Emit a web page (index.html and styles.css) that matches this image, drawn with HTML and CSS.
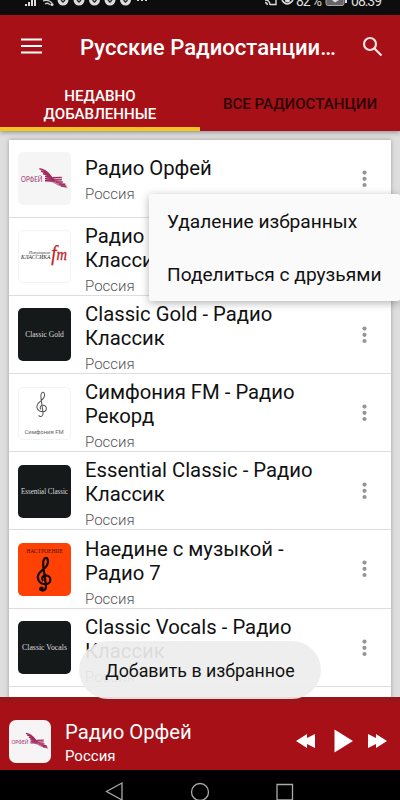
FILE: index.html
```html
<!DOCTYPE html>
<html lang="ru">
<head>
<meta charset="utf-8">
<title>Русские Радиостанции</title>
<link rel="stylesheet" href="styles.css">
</head>
<body>
<svg class="defs" width="0" height="0">
  <defs>
    <symbol id="orfey" viewBox="0 0 52 52">
      <text x="3" y="29.500" font-family="Lato" font-size="7" textLength="21" lengthAdjust="spacingAndGlyphs" fill="#97306a">ОРФЕЙ</text>
      <g fill="none" stroke="#a32a60" stroke-width="1.500">
        <path d="M21 16.500q7 1 12 8.500M22.500 18.800q6 1 10 6.500M24.500 21.200q4 1 8 4.500M26.500 24q4 0 8 2M26.500 26.200q5 0 9 1M26.500 28.300l10 .2"/>
        <path d="M34 25.300l9-.3M35 27.400l8-.2M37 29.500l7 0M40 31.500l6.500 .2M42 33.300l5.500 .4"/>
      </g>
      <path d="M28 23l6 2 6 4 5.500 3 3.500 3.800-9-2.800-6-3-6-2z" fill="#a32a60" opacity=".6"/>
    </symbol>
    <symbol id="clef" viewBox="0 0 24 46">
      <path d="M11 31C8 28 10 24 14 24c8 0 8 11 0 11-8 0-12-7-8.500-13C8 17 18 14 17 6c-.5-5-4-5-5.500-1-1.500 4-.5 8 1 17l2 15c.5 6-5 7.500-7.500 4"/>
    </symbol>
    <symbol id="dots" viewBox="0 0 6 18"><circle cx="2.500" cy="2.600" r="2.100"/><circle cx="2.500" cy="8.800" r="2.100"/><circle cx="2.500" cy="15" r="2.100"/></symbol>
  </defs>
</svg>
<div class="screen">
  <div class="status">
    <svg width="400" height="15" viewBox="0 0 400 15" fill="#ddd">
      <path d="M25 4h2v2h-2zM28 2h2v4h-2zM31 0h2v6h-2zM34 0h2v6h-2z"/>
      <path d="M43 1q5-2 9 2M45 4q3-2 5 1" fill="none" stroke="#ccc" stroke-width="1.300"/><circle cx="52" cy="4.500" r="1.500"/>
      <circle cx="63" cy="0" r="5.500"/><circle cx="79" cy="0" r="5.500"/><circle cx="94.500" cy="0" r="5.500"/><circle cx="110" cy="0" r="5.500"/><circle cx="125.500" cy="0" r="5.500"/>
      <path d="M61 0l2 2 2-2M77 0l2 2 2-2M92.500 0l2 2 2-2M108 0l2 2 2-2M123.500 0l2 2 2-2" fill="none" stroke="#222" stroke-width="1.300"/>
      <path d="M137 0h2v1h-2zM141 0h2v1h-2zM145 0h2v1h-2z"/>
      <path d="M265 0q5 0 5 5M265 2.500q2 0 2.500 2.500M270 4.500h6V0" fill="none" stroke="#ddd" stroke-width="1.400"/>
      <path d="M282 0q5 8 11 0" fill="none" stroke="#ddd" stroke-width="1.500"/><circle cx="287.500" cy="0" r="2.500"/>
      <rect x="326" y="-6" width="18" height="11.500" rx="2" fill="#666" stroke="#aaa"/><path d="M332 0l3 2.500L339 0zM345 0h2v3h-2z"/>
      <text class="status-text" x="296" y="5.500" textLength="26">82 %</text>
      <text class="status-text" x="351" y="5.500" textLength="31">08:39</text>
    </svg>
  </div>
  <header class="header">
    <div class="toolbar">
      <svg class="menu" width="22" height="16" viewBox="0 0 22 16"><path d="M0 1.500h21M0 8h21M0 14.500h21"/></svg>
      <h1 class="title">Русские Радиостанции…</h1>
      <svg class="search" width="22" height="22" viewBox="0 0 22 22"><circle cx="8" cy="8" r="6"/><path d="M12.500 12.500l7 7"/></svg>
    </div>
    <div class="tabs">
      <div class="tab tab-active">НЕДАВНО<br>ДОБАВЛЕННЫЕ</div>
      <div class="tab">ВСЕ РАДИОСТАНЦИИ</div>
    </div>
  </header>
  <main class="content">
    <div class="card">
      <div class="row single">
        <div class="art gray"><svg viewBox="0 0 52 52"><use href="#orfey"/></svg></div>
        <div class="info"><div class="name">Радио Орфей</div><div class="country">Россия</div></div>
        <svg class="more"><use href="#dots"/></svg>
      </div>
      <div class="row">
        <div class="art white"><svg viewBox="0 0 52 52"><text x="10" y="23.500" class="serif" font-size="4.500" textLength="22" lengthAdjust="spacingAndGlyphs" fill="#333">Популярная</text><text x="2" y="29" class="serif" font-size="6.500" textLength="30" lengthAdjust="spacingAndGlyphs" fill="#222">КЛАССИКА</text><text x="33" y="30" class="serif fm" font-size="17" textLength="16" lengthAdjust="spacingAndGlyphs"><tspan font-size="22">f</tspan>m</text></svg></div>
        <div class="info"><div class="name">Радио<br>Классика</div><div class="country">Россия</div></div>
        <svg class="more"><use href="#dots"/></svg>
      </div>
      <div class="row">
        <div class="art dark"><svg viewBox="0 0 52 52"><text x="7" y="28" class="logo" textLength="38" lengthAdjust="spacingAndGlyphs">Classic Gold</text></svg></div>
        <div class="info"><div class="name">Classic Gold - Радио<br>Классик</div><div class="country">Россия</div></div>
        <svg class="more"><use href="#dots"/></svg>
      </div>
      <div class="row">
        <div class="art white"><svg viewBox="0 0 52 52"><use href="#clef" x="15" y="3" width="16" height="28" fill="none" stroke="#555" stroke-width="1.700"/><text x="5.500" y="47" font-family="Roboto" font-size="6" textLength="40" lengthAdjust="spacingAndGlyphs" fill="#666">Симфония FM</text></svg></div>
        <div class="info"><div class="name">Симфония FM - Радио<br>Рекорд</div><div class="country">Россия</div></div>
        <svg class="more"><use href="#dots"/></svg>
      </div>
      <div class="row">
        <div class="art dark"><svg viewBox="0 0 52 52"><text x="3" y="28" class="logo" textLength="46" lengthAdjust="spacingAndGlyphs">Essential Classic</text></svg></div>
        <div class="info"><div class="name">Essential Classic - Радио<br>Классик</div><div class="country">Россия</div></div>
        <svg class="more"><use href="#dots"/></svg>
      </div>
      <div class="row">
        <div class="art orange"><svg viewBox="0 0 52 52"><text x="8" y="9.500" class="serif upright" font-size="7" textLength="36" lengthAdjust="spacingAndGlyphs" fill="#40120a">НАСТРОЕНИЕ</text><use href="#clef" x="16" y="13" width="19" height="36" fill="none" stroke="#160b08" stroke-width="2.800"/><circle cx="23" cy="45" r="2.300" fill="#160b08"/></svg></div>
        <div class="info"><div class="name">Наедине с музыкой -<br>Радио 7</div><div class="country">Россия</div></div>
        <svg class="more"><use href="#dots"/></svg>
      </div>
      <div class="row">
        <div class="art dark"><svg viewBox="0 0 52 52"><text x="4" y="28" class="logo" textLength="44" lengthAdjust="spacingAndGlyphs">Classic Vocals</text></svg></div>
        <div class="info"><div class="name">Classic Vocals - Радио<br>Классик</div><div class="country">Россия</div></div>
        <svg class="more"><use href="#dots"/></svg>
      </div>
    </div>
  </main>
  <footer class="player">
    <div class="cover"><svg viewBox="0 0 52 52"><use href="#orfey"/></svg></div>
    <div class="now"><div class="now-title">Радио Орфей</div><div class="now-country">Россия</div></div>
    <svg class="controls" width="94" height="26" viewBox="0 0 94 26"><path d="M1 13l11-7v4l8-4v14l-8-4v4zM39.500 1.500v23L58 13zM92 13l-11-7v4l-8-4v14l8-4v4z"/></svg>
  </footer>
  <nav class="nav"><svg width="400" height="30" viewBox="0 0 400 30"><path d="M122 13v17l-15.500-8.500z"/><circle cx="200" cy="22" r="8.500"/><path d="M277 14.500h15.500V30H277z"/></svg></nav>
  <div class="popup"><div class="item">Удаление избранных</div><div class="item share">Поделиться с друзьями</div></div>
  <div class="toast">Добавить в избранное</div>
</div>
</body>
</html>
```
FILE: styles.css
```css
* { box-sizing: border-box; }
body { margin: 0; font-family: Roboto, sans-serif; background: #000; }
svg { display: block; }
.defs { position: absolute; }
.screen { position: relative; width: 400px; height: 800px; overflow: hidden; display: flex; flex-direction: column; }
.status { height: 15px; background: #0c0d0c; flex: none; }
.status-text { font-size: 14px; fill: #ddd; }
.header { height: 116px; background: #a61016; flex: none; display: flex; flex-direction: column; box-shadow: 0 1px 5px rgba(0,0,0,.4); z-index: 1; }
.toolbar { height: 64px; display: flex; align-items: center; padding: 0 16px 0 21px; }
.menu { fill: none; stroke: #fff; stroke-width: 1.800; margin-top: -2px; }
.title { margin: 0 0 0 37px; color: #fff; font-size: 22.100px; font-weight: 500; white-space: nowrap; flex: 1; }
.search { fill: none; stroke: #fbe4e4; stroke-width: 2.200; margin-top: -1px; }
.tabs { height: 52px; display: flex; }
.tab { width: 200px; display: flex; align-items: center; justify-content: center; text-align: center; font-size: 15.100px; line-height: 17.800px; font-weight: 500; color: #2a0507; }
.tab-active { color: #fff; border-bottom: 4px solid #f4c420; padding: 6px 0 0; }
.content { height: 566px; flex: none; background: #dedede; padding: 8.500px 9px 0; overflow: hidden; }
.card { height: 570px; background: #fff; box-shadow: 0 0 4px rgba(0,0,0,.3); }
.row { height: 78.200px; border-bottom: 1px solid #ddd; display: flex; align-items: flex-start; padding: 12.500px 23.500px 0 9px; }
.art { width: 53px; height: 53px; flex: none; border-radius: 5px; overflow: hidden; }
.gray { background: #f5f5f5; }
.white { background: #fff; border: 1px solid #f3f3f3; }
.dark { background: #15191a; }
.orange { background: #ff4105; }
.serif { font-family: "Liberation Serif", serif; font-style: italic; }
.fm { fill: #c11b20; stroke: #c11b20; stroke-width: .3; }
.upright { font-style: normal; }
.logo { font-family: "Liberation Serif", serif; font-size: 7.500px; fill: #ddd; }
.info { flex: 1; margin: -6.300px 0 0 14px; }
.single .info { margin-top: 4px; }
.name { font-size: 20.300px; line-height: 24px; color: #111; white-space: nowrap; }
.country { font-size: 15px; line-height: 18px; color: #555; margin-top: 5px; font-weight: 300; }
.more { width: 6px; height: 18px; fill: #959595; margin-top: 17.500px; flex: none; }
.player { height: 73px; flex: none; background: linear-gradient(#96161a, #a61016 9px); display: flex; align-items: flex-start; padding: 23px 12px 0 9px; color: #fff; z-index: 1; }
.cover { width: 42px; height: 43px; border-radius: 7px; background: #f6f4f5; flex: none; }
.now { flex: 1; margin: -1px 0 0 14px; }
.now-title { font-size: 20.300px; line-height: 27px; }
.now-country { font-size: 15px; line-height: 20px; }
.controls { fill: #fff; margin-top: 8px; margin-right: -.5px; }
.nav { height: 30px; background: #000; }
.nav svg { fill: none; stroke: #aaa; stroke-width: 1.300; }
.popup { position: absolute; z-index: 2; left: 149px; top: 194px; width: 251px; height: 107px; background: #fafafa; border-radius: 2px; box-shadow: 0 2px 9px rgba(0,0,0,.3); padding-left: 18px; font-size: 19.150px; color: #111; white-space: nowrap; }
.item { height: 53.500px; line-height: 55px; }
.share { line-height: 54px; }
.toast { position: absolute; z-index: 3; left: 79px; top: 641px; width: 242px; height: 58px; border-radius: 29px; background: rgba(237,237,237,.92); text-align: center; line-height: 59px; font-size: 17.800px; color: #111; white-space: nowrap; }
```
